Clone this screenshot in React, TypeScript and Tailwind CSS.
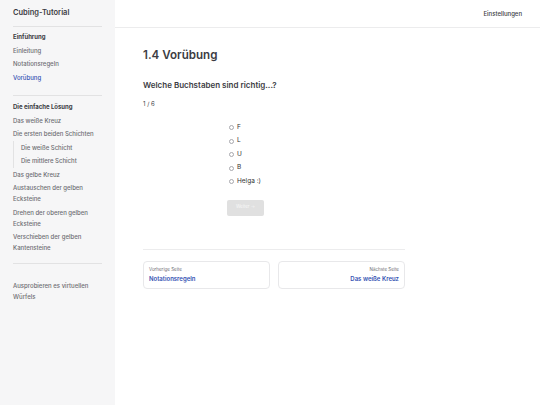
function Item({
  children,
  active,
  bold,
}: {
  children: React.ReactNode;
  active?: boolean;
  bold?: boolean;
}) {
  return (
    <div
      className={
        "py-[1.25px] text-[6px] leading-[11px] " +
        (bold
          ? "font-bold text-[#3c3c43]"
          : active
            ? "font-medium text-[#3451b2]"
            : "font-medium text-[#6d6d72]")
      }
    >
      {children}
    </div>
  );
}

function Sidebar() {
  return (
    <aside className="min-h-screen w-[115px] shrink-0 bg-[#f6f6f7] px-[13px]">
      <div className="flex h-[27px] items-center border-b border-[#e2e2e3] text-[7.5px] font-semibold text-[#3c3c43]">
        Cubing-Tutorial
      </div>
      <div className="border-b border-[#e2e2e3] pt-[3px] pb-[11px]">
        <Item bold>Einführung</Item>
        <Item>Einleitung</Item>
        <Item>Notationsregeln</Item>
        <Item active>Vorübung</Item>
      </div>
      <div className="border-b border-[#e2e2e3] pt-[4px] pb-[8px]">
        <Item bold>Die einfache Lösung</Item>
        <Item>Das weiße Kreuz</Item>
        <Item>Die ersten beiden Schichten</Item>
        <div className="border-l border-[#e2e2e3] pl-[7px]">
          <Item>Die weiße Schicht</Item>
          <Item>Die mittlere Schicht</Item>
        </div>
        <Item>Das gelbe Kreuz</Item>
        <Item>
          Austauschen der gelben
          <br />
          Ecksteine
        </Item>
        <Item>
          Drehen der oberen gelben
          <br />
          Ecksteine
        </Item>
        <Item>
          Verschieben der gelben
          <br />
          Kantensteine
        </Item>
      </div>
      <div className="pt-[15px]">
        <Item>
          Ausprobieren es virtuellen
          <br />
          Würfels
        </Item>
      </div>
    </aside>
  );
}

function Option({ label }: { label: string }) {
  return (
    <div className="flex h-[13.5px] items-center gap-[3px] text-[6.5px] text-[#333333]">
      <span className="ml-[1px] size-[5px] rounded-full border border-[#a8a8ad] bg-white" />
      <span className="text-[#333333]">{label}</span>
    </div>
  );
}

function PageCard({
  label,
  title,
  right,
}: {
  label: string;
  title: string;
  right?: boolean;
}) {
  return (
    <div
      className={
        "flex h-[28px] flex-1 flex-col justify-center rounded-[4px] border border-[#e8e8ea] px-[5px] " +
        (right ? "items-end" : "items-start")
      }
    >
      <div className="text-[4.5px] leading-[8px] text-[#6d6d72]">{label}</div>
      <div className="text-[6px] font-semibold leading-[9px] text-[#3451b2]">
        {title}
      </div>
    </div>
  );
}

export default function App() {
  return (
    <div
      className="flex min-h-screen bg-white"
      style={{ fontFamily: "Inter, 'Liberation Sans', sans-serif" }}
    >
      <Sidebar />
      <main className="flex-1">
        <header className="flex h-[28px] items-center justify-end border-b border-[#ececed] pr-[18px] text-[6px] font-medium">
          <span className="text-[#3c3c43]">Einstellungen</span>
        </header>
        <section className="w-[290px] pl-[28px] pt-[17px]">
          <h1 className="text-[11.6px] font-semibold leading-[20px] text-[#3c3c43]">
            1.4 Vorübung
          </h1>
          <h3 className="mt-[14px] text-[8px] font-semibold leading-[12px] text-[#3c3c43]">
            Welche Buchstaben sind richtig...?
          </h3>
          <p className="mt-[8px] text-[6px] leading-[10px] text-[#3c3c43]">
            1 / 6
          </p>
          <div className="ml-[85px] mt-[12px]">
            <Option label="F" />
            <Option label="L" />
            <Option label="U" />
            <Option label="B" />
            <Option label="Helga :)" />
            <button className="mt-[11px] h-[16px] w-[37px] -translate-x-[1px] rounded-[2px] bg-[#e0e0e0] text-[4.5px] text-[#f8f8f8]">
              Weiter →
            </button>
          </div>
          <div className="mt-[33px] border-t border-[#ececed] pt-[11px]">
            <div className="flex gap-[8px]">
              <PageCard label="Vorherige Seite" title="Notationsregeln" />
              <PageCard label="Nächste Seite" title="Das weiße Kreuz" right />
            </div>
          </div>
        </section>
      </main>
    </div>
  );
}
